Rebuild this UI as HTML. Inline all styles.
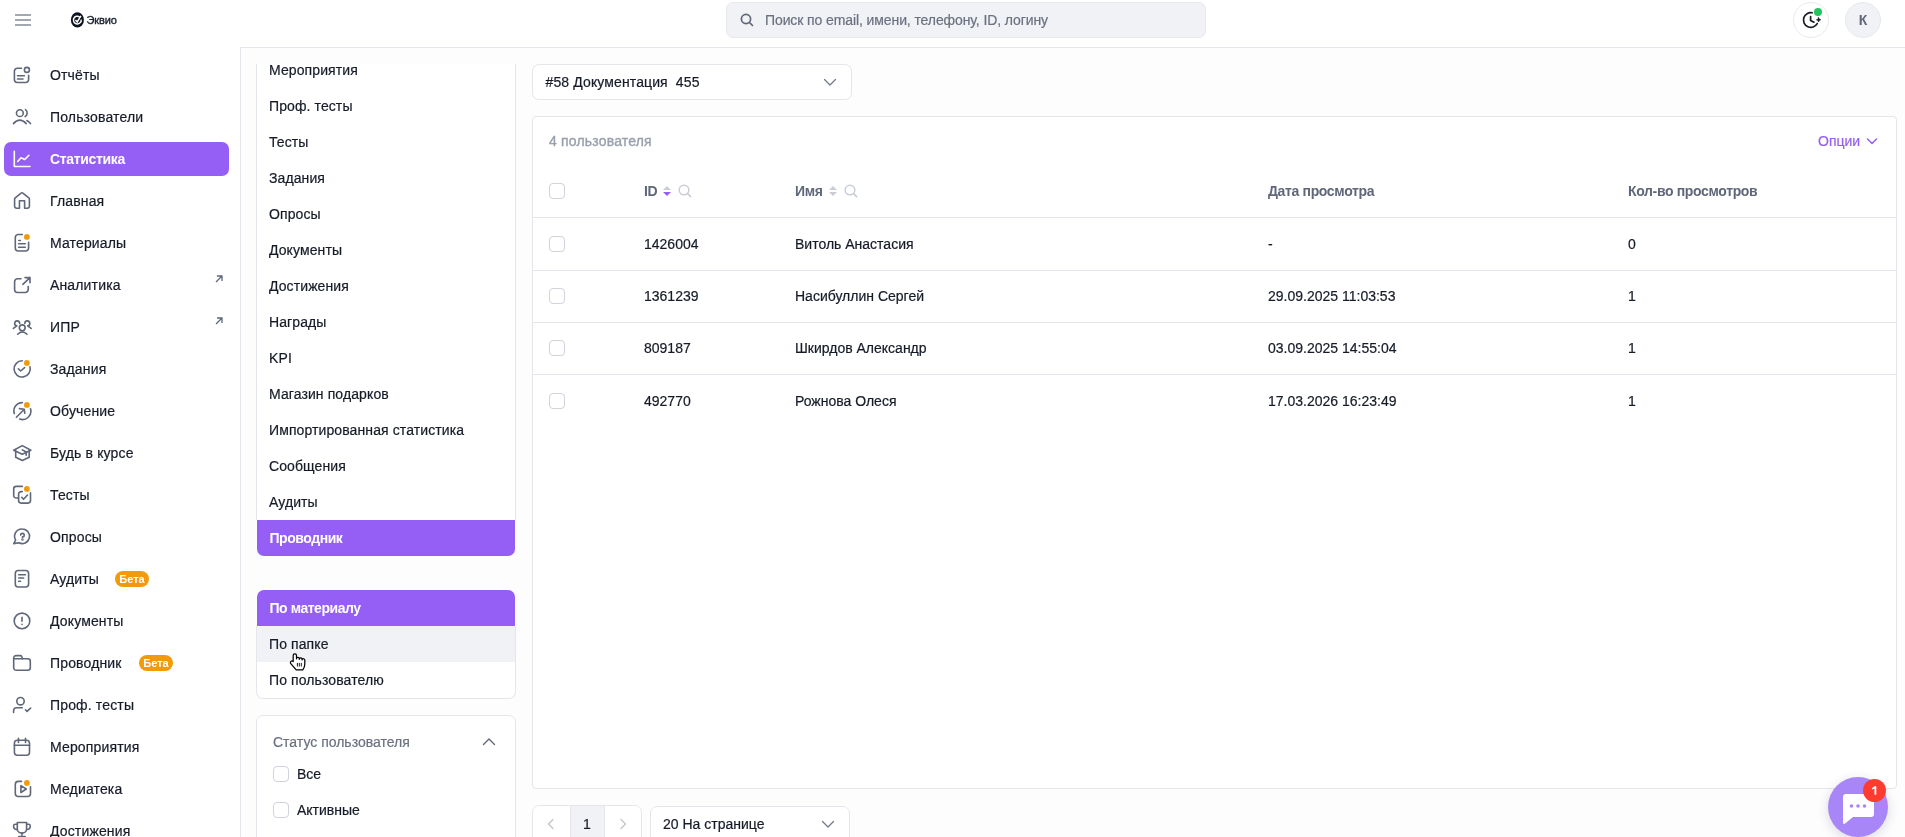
<!DOCTYPE html>
<html><head><meta charset="utf-8"><style>
*{box-sizing:border-box;margin:0;padding:0}
html,body{width:1905px;height:837px;overflow:hidden;background:#fff;font-family:"Liberation Sans",sans-serif;color:#161b28;font-size:14px}
.abs,div,svg{position:absolute}
.ic{left:12px}
.si{left:50px;height:20px;line-height:20px;font-size:14px;color:#161b28;white-space:nowrap;letter-spacing:0.15px}
.si.on{color:#fff;font-weight:bold;letter-spacing:-0.33px}
.act{left:4px;width:225px;height:34px;background:#955ef4;border-radius:7px}
.ext{left:215px}
.beta{width:34px;height:16px;border-radius:8px;background:#f29a0f;color:#fff;font-size:11px;font-weight:bold;line-height:16px;text-align:center}
#main{left:240px;top:47px;width:1665px;height:790px;border-top:1px solid #e4e6eb;border-left:1px solid #e4e6eb;background:#fdfdfe}
#hdr-search{left:726px;top:2px;width:480px;height:36px;background:#f1f2f5;border:1px solid #e6e8ec;border-radius:7px}
.mi{left:0;width:258px;height:36px;line-height:36px;padding-left:12px;font-size:14px;color:#161b28;white-space:nowrap;letter-spacing:0.1px}
.mi.on{background:#955ef4;color:#fff;font-weight:bold;border-radius:0 0 7px 7px;letter-spacing:-0.45px;padding-left:12.5px}
#list1{left:256px;top:64px;width:260px;height:456px;overflow:hidden;border-left:1px solid #e4e6eb;border-right:1px solid #e4e6eb;background:#fff}
.card{background:#fff;border:1px solid #e4e6eb;border-radius:7px;overflow:hidden}
.cb{width:16px;height:16px;border:1px solid #cfd3db;border-radius:4px;background:#fff}
.td{height:20px;line-height:20px;white-space:nowrap;color:#161b28}
.th{height:20px;line-height:20px;white-space:nowrap;color:#5f6779;font-weight:bold;letter-spacing:-0.35px}
.hl{left:532px;width:1364px;height:1px;background:#e4e6eb}
#root{left:0;top:0;width:1905px;height:837px;will-change:transform;-webkit-text-stroke:0.2px currentColor}
.th,.si.on,.mi.on,.beta,.nostroke{-webkit-text-stroke:0}
</style></head><body><div id="root">
<!-- header -->
<svg style="left:15px;top:14px" width="16" height="12" viewBox="0 0 16 12"><path d="M0 1h16M0 6h16M0 11h16" stroke="#858b98" stroke-width="1.6"/></svg>
<svg style="left:70px;top:11px" width="16" height="18" viewBox="0 0 16 18"><ellipse cx="7.4" cy="8.9" rx="6.5" ry="7.7" fill="#0d1220"/><path d="M9.6 5.9A3.9 3.9 0 1 0 11.2 8.6" fill="none" stroke="#fff" stroke-width="1.5"/><path d="M5.4 8.9L7.2 10.9L10.9 4.8" fill="none" stroke="#fff" stroke-width="1.5"/></svg>
<div style="left:86.5px;top:13px;font-size:11px;line-height:14px;color:#1a1f2c;letter-spacing:-0.1px;-webkit-text-stroke:0.35px #1a1f2c">Эквио</div>
<div id="hdr-search"></div>
<svg style="left:740px;top:13px" width="14" height="14" viewBox="0 0 14 14" fill="none" stroke="#5f6779" stroke-width="1.7" stroke-linecap="round"><circle cx="6" cy="6" r="4.6"/><path d="M9.5 9.5L12.5 12.5"/></svg>
<div style="left:765px;top:10px;height:20px;line-height:20px;color:#6b7180;white-space:nowrap;letter-spacing:-0.1px">Поиск по email, имени, телефону, ID, логину</div>
<div style="left:1793px;top:2px;width:36px;height:36px;border-radius:50%;border:1px solid #e6e8ec;background:#fff"></div>
<svg style="left:1799px;top:8px" width="24" height="24" viewBox="0 0 24 24" fill="none" stroke="#161b28" stroke-width="1.7" stroke-linecap="round"><path d="M13.2 4.75A7.35 7.35 0 1 0 18.2 15.6"/><path d="M11.6 8.6V12.4L15 14.2"/><path d="M19.6 9.6L20.3 11.1L21.8 11.8L20.3 12.5L19.6 14L18.9 12.5L17.4 11.8L18.9 11.1Z" fill="#161b28" stroke-width="0.6"/></svg>
<div style="left:1813.8px;top:7.8px;width:8.4px;height:8.4px;border-radius:50%;background:#22c55e"></div>
<div style="left:1845px;top:2px;width:36px;height:36px;border-radius:50%;border:1px solid #e6e8ec;background:#f1f2f5;text-align:center;line-height:34px;font-weight:bold;color:#5f6779;font-size:14px;-webkit-text-stroke:0">К</div>

<!-- sidebar -->
<svg class="ic" style="top:65px" width="20" height="20" viewBox="0 0 20 20" fill="none" stroke="#5f6779" stroke-width="1.6" stroke-linecap="round" stroke-linejoin="round"><path d="M9.5 3.2H5.4A3 3 0 0 0 2.4 6.2V14.5A3 3 0 0 0 5.4 17.5H13.6A3 3 0 0 0 16.6 14.5V10.3"/><circle cx="14.9" cy="4.9" r="2.5"/><path d="M5.5 10.75H12.4M5.5 14H11"/></svg>
<div class="si" style="top:65px">Отчёты</div>
<svg class="ic" style="top:107px" width="20" height="20" viewBox="0 0 20 20" fill="none" stroke="#5f6779" stroke-width="1.6" stroke-linecap="round" stroke-linejoin="round"><circle cx="7.85" cy="6.15" r="3.4"/><path d="M13.5 2.6A4.2 4.2 0 0 1 13.1 9.6"/><path d="M1.4 16.6Q7.8 9.6 14.2 16.6"/><path d="M14.9 13.5Q17 14.6 18.5 16.6"/></svg>
<div class="si" style="top:107px">Пользователи</div>
<div class="act" style="top:142px"></div>
<svg class="ic" style="top:149px" width="20" height="20" viewBox="0 0 20 20" fill="none" stroke="#fff" stroke-width="1.6" stroke-linecap="round" stroke-linejoin="round"><path d="M2.3 2.2V17.5H18"/><path d="M5.7 12.5L9 8.7L12.8 10.4L16.9 6.3"/></svg>
<div class="si on" style="top:149px">Статистика</div>
<svg class="ic" style="top:191px" width="20" height="20" viewBox="0 0 20 20" fill="none" stroke="#5f6779" stroke-width="1.6" stroke-linecap="round" stroke-linejoin="round"><path d="M2.6 15.2V8.1A1.6 1.6 0 0 1 3.2 6.9L9.1 2.1A1.5 1.5 0 0 1 10.9 2.1L16.8 6.9A1.6 1.6 0 0 1 17.4 8.1V15.2A2 2 0 0 1 15.4 17.2H12.6V9.8H7.45V17.2H4.6A2 2 0 0 1 2.6 15.2Z"/></svg>
<div class="si" style="top:191px">Главная</div>
<svg class="ic" style="top:233px" width="20" height="20" viewBox="0 0 20 20" fill="none" stroke="#5f6779" stroke-width="1.6" stroke-linecap="round" stroke-linejoin="round"><path d="M10.3 1.45H6.3A3 3 0 0 0 3.3 4.45V15A3 3 0 0 0 6.3 18H13.6A3 3 0 0 0 16.6 15V9.2"/><path d="M6.8 7.45H8.4M6.6 10.75H13.3M6.6 14.2H13.3"/><circle cx="14.9" cy="3.9" r="3.6" fill="#fff" stroke="none"/><circle cx="14.9" cy="3.9" r="2.9" fill="#f29a0f" stroke="none"/></svg>
<div class="si" style="top:233px">Материалы</div>
<svg class="ic" style="top:275px" width="20" height="20" viewBox="0 0 20 20" fill="none" stroke="#5f6779" stroke-width="1.6" stroke-linecap="round" stroke-linejoin="round"><path d="M9 3.8H5.6a3 3 0 0 0-3 3V14.5a3 3 0 0 0 3 3h7.6a3 3 0 0 0 3-3v-3"/><path d="M10.8 9.3L18 2.6M13 2.6h5v5.2"/></svg>
<div class="si" style="top:275px">Аналитика</div>
<svg class="ext" style="top:275px" width="8" height="8" viewBox="0 0 8 8" fill="none" stroke="#5f6779" stroke-width="1.3"><path d="M1 7L7 1M2 1H7V6"/></svg>
<svg class="ic" style="top:317px" width="20" height="20" viewBox="0 0 20 20" fill="none" stroke="#5f6779" stroke-width="1.6" stroke-linecap="round" stroke-linejoin="round"><circle cx="10.25" cy="10.8" r="2.9"/><path d="M5.6 17.2Q10.3 12.6 15 17.2"/><path d="M7.7 6.4A2.5 2.5 0 1 0 4.77 8.86L1.4 11.4"/><path d="M12.8 6.4A2.5 2.5 0 1 1 15.73 8.86L19.1 11.4"/></svg>
<div class="si" style="top:317px">ИПР</div>
<svg class="ext" style="top:317px" width="8" height="8" viewBox="0 0 8 8" fill="none" stroke="#5f6779" stroke-width="1.3"><path d="M1 7L7 1M2 1H7V6"/></svg>
<svg class="ic" style="top:359px" width="20" height="20" viewBox="0 0 20 20" fill="none" stroke="#5f6779" stroke-width="1.6" stroke-linecap="round" stroke-linejoin="round"><path d="M10.3 1.8A8.1 8.1 0 1 0 18 7.8"/><path d="M6.3 9.75L8.6 12L12.6 8.6"/><circle cx="14.9" cy="3.9" r="3.6" fill="#fff" stroke="none"/><circle cx="14.9" cy="3.9" r="2.9" fill="#f29a0f" stroke="none"/></svg>
<div class="si" style="top:359px">Задания</div>
<svg class="ic" style="top:401px" width="20" height="20" viewBox="0 0 20 20" fill="none" stroke="#5f6779" stroke-width="1.6" stroke-linecap="round" stroke-linejoin="round"><path d="M10.3 1.6A8.4 8.4 0 0 0 2.3 12.6"/><path d="M7.7 18.1A8.4 8.4 0 0 0 18.5 7.7"/><path d="M4.4 16.3L12.3 8.3M7.5 7.6L12.3 8.3L12.8 12.3"/><circle cx="14.9" cy="3.9" r="3.6" fill="#fff" stroke="none"/><circle cx="14.9" cy="3.9" r="2.9" fill="#f29a0f" stroke="none"/></svg>
<div class="si" style="top:401px">Обучение</div>
<svg class="ic" style="top:443px" width="20" height="20" viewBox="0 0 20 20" fill="none" stroke="#5f6779" stroke-width="1.6" stroke-linecap="round" stroke-linejoin="round"><path d="M1.7 7.2L10.3 2.6L18.9 7.2L10.3 11.2Z"/><path d="M3.7 7.9V14.3L10.3 17.5L17.2 14.3V7.9"/><path d="M10.3 6.9L14.2 9V12.3"/></svg>
<div class="si" style="top:443px">Будь в курсе</div>
<svg class="ic" style="top:485px" width="20" height="20" viewBox="0 0 20 20" fill="none" stroke="#5f6779" stroke-width="1.6" stroke-linecap="round" stroke-linejoin="round"><path d="M10.3 1.4H4.2A2.5 2.5 0 0 0 1.7 3.9V10.5A2.5 2.5 0 0 0 4.2 13H6.6"/><path d="M10.3 6.6H9.1A2.5 2.5 0 0 0 6.6 9.1V15.6A2.5 2.5 0 0 0 9.1 18.1H16A2.5 2.5 0 0 0 18.5 15.6V7.9"/><path d="M9.7 12.3L11.5 14.2L15.5 10"/><circle cx="14.9" cy="3.9" r="3.6" fill="#fff" stroke="none"/><circle cx="14.9" cy="3.9" r="2.9" fill="#f29a0f" stroke="none"/></svg>
<div class="si" style="top:485px">Тесты</div>
<svg class="ic" style="top:527px" width="20" height="20" viewBox="0 0 20 20" fill="none" stroke="#5f6779" stroke-width="1.6" stroke-linecap="round" stroke-linejoin="round"><path d="M10.3 2A7.3 7.3 0 1 1 6.9 15.8L1.8 16.6L3.6 13A7.3 7.3 0 0 1 10.3 2Z"/><path d="M8.7 8.1A1.75 1.75 0 1 1 10.45 9.9V10.4"/><circle cx="10.45" cy="12.4" r="0.45"/></svg>
<div class="si" style="top:527px">Опросы</div>
<svg class="ic" style="top:569px" width="20" height="20" viewBox="0 0 20 20" fill="none" stroke="#5f6779" stroke-width="1.6" stroke-linecap="round" stroke-linejoin="round"><rect x="3.3" y="1.45" width="13.3" height="16.55" rx="3"/><path d="M6.7 5.7H13.4M6.7 9H11.7M6.7 12.3H8.5"/></svg>
<div class="si" style="top:569px">Аудиты</div>
<div class="beta" style="top:571px;left:115px">Бета</div>
<svg class="ic" style="top:611px" width="20" height="20" viewBox="0 0 20 20" fill="none" stroke="#5f6779" stroke-width="1.6" stroke-linecap="round" stroke-linejoin="round"><circle cx="10" cy="9.9" r="7.8"/><path d="M10 6.4V10.2M10 13.2V13.4"/></svg>
<div class="si" style="top:611px">Документы</div>
<svg class="ic" style="top:653px" width="20" height="20" viewBox="0 0 20 20" fill="none" stroke="#5f6779" stroke-width="1.6" stroke-linecap="round" stroke-linejoin="round"><path d="M1.7 14.7V5A2.4 2.4 0 0 1 4.1 2.6H8.3A1.5 1.5 0 0 1 9.7 3.5L10.6 5.7H15.8A2.5 2.5 0 0 1 18.3 8.2V14.7A2.5 2.5 0 0 1 15.8 17.2H4.2A2.5 2.5 0 0 1 1.7 14.7Z"/><path d="M1.7 5.7H10.6"/></svg>
<div class="si" style="top:653px">Проводник</div>
<div class="beta" style="top:655px;left:139px">Бета</div>
<svg class="ic" style="top:695px" width="20" height="20" viewBox="0 0 20 20" fill="none" stroke="#5f6779" stroke-width="1.6" stroke-linecap="round" stroke-linejoin="round"><circle cx="8.5" cy="6.2" r="3.7"/><path d="M1.6 17.4V15.8A3 3 0 0 1 4.6 12.8H10.3"/><path d="M13.5 14.8L15 16.4L18.6 13.1"/></svg>
<div class="si" style="top:695px">Проф. тесты</div>
<svg class="ic" style="top:737px" width="20" height="20" viewBox="0 0 20 20" fill="none" stroke="#5f6779" stroke-width="1.6" stroke-linecap="round" stroke-linejoin="round"><rect x="2.4" y="3.3" width="15.1" height="15" rx="3"/><path d="M2.4 8.3H17.5M6.45 1.3V5.4M13.5 1.3V5.4"/></svg>
<div class="si" style="top:737px">Мероприятия</div>
<svg class="ic" style="top:779px" width="20" height="20" viewBox="0 0 20 20" fill="none" stroke="#5f6779" stroke-width="1.6" stroke-linecap="round" stroke-linejoin="round"><path d="M9.5 2.4H6.3A3 3 0 0 0 3.3 5.4V14.5A3 3 0 0 0 6.3 17.5H15.5A3 3 0 0 0 18.5 14.5V7.9"/><path d="M8.9 6.6L14.3 10L8.9 13.5Z"/><circle cx="14.9" cy="3.9" r="3.6" fill="#fff" stroke="none"/><circle cx="14.9" cy="3.9" r="2.9" fill="#f29a0f" stroke="none"/></svg>
<div class="si" style="top:779px">Медиатека</div>
<svg class="ic" style="top:821px" width="20" height="20" viewBox="0 0 20 20" fill="none" stroke="#5f6779" stroke-width="1.6" stroke-linecap="round" stroke-linejoin="round"><path d="M5.3 1.5H14.6V8A4.65 4.1 0 0 1 5.3 8Z"/><path d="M5.3 3.3H3.2A1.6 1.6 0 0 0 1.6 4.9V5.5A2.8 2.8 0 0 0 5.3 8.3M14.6 3.3H16.6A1.6 1.6 0 0 1 18.2 4.9V5.5A2.8 2.8 0 0 1 14.6 8.3"/><path d="M9.95 12.1V14.3"/><path d="M7.2 16H12.7" stroke-width="2.6"/></svg>
<div class="si" style="top:821px">Достижения</div>

<div id="main"></div>
<div id="list1">
<div class="mi" style="top:-12px">Мероприятия</div>
<div class="mi" style="top:24px">Проф. тесты</div>
<div class="mi" style="top:60px">Тесты</div>
<div class="mi" style="top:96px">Задания</div>
<div class="mi" style="top:132px">Опросы</div>
<div class="mi" style="top:168px">Документы</div>
<div class="mi" style="top:204px">Достижения</div>
<div class="mi" style="top:240px">Награды</div>
<div class="mi" style="top:276px">KPI</div>
<div class="mi" style="top:312px">Магазин подарков</div>
<div class="mi" style="top:348px">Импортированная статистика</div>
<div class="mi" style="top:384px">Сообщения</div>
<div class="mi" style="top:420px">Аудиты</div>
</div>
<div class="mi on" style="left:257px;top:520px;width:258px;border-radius:0 0 7px 7px">Проводник</div>
<div class="mi on" style="left:257px;top:590px;width:258px;border-radius:7px 7px 0 0">По материалу</div>
<div style="left:256px;top:626px;width:260px;height:73px;background:#fff;border:1px solid #e4e6eb;border-top:none;border-radius:0 0 7px 7px;overflow:hidden">
  <div class="mi" style="top:0;left:0;background:#f1f2f5">По папке</div>
  <div class="mi" style="top:36px;left:0">По пользователю</div>
</div>
<div class="card" style="left:256px;top:715px;width:260px;height:140px">
  <div style="left:16px;top:16px;height:20px;line-height:20px;color:#6b7180;white-space:nowrap">Статус пользователя</div>
  <svg style="left:225px;top:21px" width="14" height="10" viewBox="0 0 14 10" fill="none" stroke="#5f6779" stroke-width="1.35" stroke-linecap="round" stroke-linejoin="round"><path d="M1.5 7.5L7 2L12.5 7.5"/></svg>
  <div class="cb" style="left:16px;top:50px"></div>
  <div style="left:40px;top:48px;height:20px;line-height:20px;white-space:nowrap">Все</div>
  <div class="cb" style="left:16px;top:86px"></div>
  <div style="left:40px;top:84px;height:20px;line-height:20px;white-space:nowrap">Активные</div>
</div>
<svg style="left:289px;top:653px" width="18" height="19" viewBox="0 0 18 19"><path d="M4.2 8.5V2.6A1.65 1.65 0 0 1 7.5 2.6V5.8A1.4 1.4 0 0 1 10.3 5.8V6.3A1.4 1.4 0 0 1 13.1 6.3V6.9A1.35 1.35 0 0 1 15.8 7.3V11C15.8 13.5 14.8 15.5 13.8 16.8H7.2L1.8 10.6A1.3 1.3 0 0 1 4.2 8.5Z" fill="#fff" stroke="#000" stroke-width="1.25" stroke-linejoin="round"/><path d="M8.4 9.9V13.5M10.3 9.9V13.5M12.3 9.9V13.5" stroke="#000" stroke-width="0.9"/></svg>

<!-- right -->
<div class="card" style="left:532px;top:64px;width:320px;height:36px"></div>
<div style="left:545.5px;top:72px;height:20px;line-height:20px;white-space:nowrap;letter-spacing:0.12px">#58 Документация&nbsp; 455</div>
<svg style="left:823px;top:77px" width="14" height="10" viewBox="0 0 14 10" fill="none" stroke="#737a89" stroke-width="1.3" stroke-linecap="round" stroke-linejoin="round"><path d="M1.5 2.5L7 8L12.5 2.5"/></svg>

<div class="card" style="left:532px;top:116px;width:1365px;height:673px;border-radius:4px"></div>
<div style="left:549px;top:131px;height:20px;line-height:20px;white-space:nowrap;color:#99a0ac;letter-spacing:0.18px;-webkit-text-stroke:0.35px #99a0ac">4 пользователя</div>
<div style="left:1818px;top:131px;height:20px;line-height:20px;white-space:nowrap;color:#955ef4">Опции</div>
<svg style="left:1866px;top:136px" width="12" height="10" viewBox="0 0 12 10" fill="none" stroke="#955ef4" stroke-width="1.5" stroke-linecap="round" stroke-linejoin="round"><path d="M1.5 3L6 7.5L10.5 3"/></svg>

<div class="cb" style="left:549px;top:183px"></div>
<div class="th" style="left:644px;top:181px">ID</div>
<svg style="left:662px;top:185px" width="10" height="12" viewBox="0 0 10 12"><path d="M1 5L5 1L9 5Z" fill="#c9cdd5"/><path d="M1 7L5 11L9 7Z" fill="#955ef4"/></svg>
<svg style="left:678px;top:184px" width="14" height="14" viewBox="0 0 14 14" fill="none" stroke="#c9cdd5" stroke-width="1.5" stroke-linecap="round"><circle cx="6" cy="6" r="4.8"/><path d="M9.6 9.6L12.6 12.6"/></svg>
<div class="th" style="left:795px;top:181px">Имя</div>
<svg style="left:828px;top:185px" width="10" height="12" viewBox="0 0 10 12"><path d="M1 5L5 1L9 5Z" fill="#c9cdd5"/><path d="M1 7L5 11L9 7Z" fill="#c9cdd5"/></svg>
<svg style="left:844px;top:184px" width="14" height="14" viewBox="0 0 14 14" fill="none" stroke="#c9cdd5" stroke-width="1.5" stroke-linecap="round"><circle cx="6" cy="6" r="4.8"/><path d="M9.6 9.6L12.6 12.6"/></svg>
<div class="th" style="left:1268px;top:181px">Дата просмотра</div>
<div class="th" style="left:1628px;top:181px">Кол-во просмотров</div>
<div class="hl" style="top:217px"></div>
<div class="cb" style="left:549px;top:236.0px"></div>
<div class="td" style="left:644px;top:234.0px">1426004</div>
<div class="td" style="left:795px;top:234.0px">Витоль Анастасия</div>
<div class="td" style="left:1268px;top:234.0px">-</div>
<div class="td" style="left:1628px;top:234.0px">0</div>
<div class="hl" style="top:270px"></div>
<div class="cb" style="left:549px;top:288.0px"></div>
<div class="td" style="left:644px;top:286.0px">1361239</div>
<div class="td" style="left:795px;top:286.0px">Насибуллин Сергей</div>
<div class="td" style="left:1268px;top:286.0px">29.09.2025 11:03:53</div>
<div class="td" style="left:1628px;top:286.0px">1</div>
<div class="hl" style="top:322px"></div>
<div class="cb" style="left:549px;top:340.0px"></div>
<div class="td" style="left:644px;top:338.0px">809187</div>
<div class="td" style="left:795px;top:338.0px">Шкирдов Александр</div>
<div class="td" style="left:1268px;top:338.0px">03.09.2025 14:55:04</div>
<div class="td" style="left:1628px;top:338.0px">1</div>
<div class="hl" style="top:374px"></div>
<div class="cb" style="left:549px;top:393.0px"></div>
<div class="td" style="left:644px;top:391.0px">492770</div>
<div class="td" style="left:795px;top:391.0px">Рожнова Олеся</div>
<div class="td" style="left:1268px;top:391.0px">17.03.2026 16:23:49</div>
<div class="td" style="left:1628px;top:391.0px">1</div>

<!-- pagination -->
<div class="card" style="left:532px;top:805px;width:110px;height:50px">
  <div style="left:37px;top:0;width:35px;height:50px;background:#f1f2f5;border-left:1px solid #e4e6eb;border-right:1px solid #e4e6eb"></div>
</div>
<svg style="left:546px;top:818px" width="10" height="12" viewBox="0 0 10 12" fill="none" stroke="#c2c6ce" stroke-width="1.4" stroke-linecap="round" stroke-linejoin="round"><path d="M7 1.5L2.5 6L7 10.5"/></svg>
<div style="left:583px;top:814px;height:20px;line-height:20px">1</div>
<svg style="left:618px;top:818px" width="10" height="12" viewBox="0 0 10 12" fill="none" stroke="#c2c6ce" stroke-width="1.4" stroke-linecap="round" stroke-linejoin="round"><path d="M3 1.5L7.5 6L3 10.5"/></svg>
<div class="card" style="left:650px;top:806px;width:200px;height:50px"></div>
<div style="left:663px;top:814px;height:20px;line-height:20px;white-space:nowrap">20 На странице</div>
<svg style="left:821px;top:819px" width="14" height="10" viewBox="0 0 14 10" fill="none" stroke="#737a89" stroke-width="1.3" stroke-linecap="round" stroke-linejoin="round"><path d="M1.5 2.5L7 8L12.5 2.5"/></svg>

<!-- chat -->
<div style="left:1828px;top:777px;width:60px;height:60px;border-radius:50%;background:#a886f7;box-shadow:0 3px 12px rgba(40,40,70,0.16)"></div>
<svg style="left:1840px;top:792px" width="36" height="34" viewBox="0 0 36 34"><path d="M6 2H31A3 3 0 0 1 34 5V22A3 3 0 0 1 31 25H13L4.5 32A1.5 1.5 0 0 1 3 31V5A3 3 0 0 1 6 2Z" fill="#fff"/><circle cx="11.5" cy="14" r="1.8" fill="#a886f7"/><circle cx="18" cy="14" r="1.8" fill="#a886f7"/><circle cx="24.5" cy="14" r="1.8" fill="#a886f7"/></svg>
<div style="left:1863px;top:779px;width:23px;height:23px;border-radius:50%;background:#ff3b30"></div>
<svg style="left:1863px;top:779px" width="23" height="23" viewBox="0 0 23 23"><path d="M11.6 7.2H13.3V15.8H11.5V9.6L9.1 10.4V8.9Z" fill="#fff"/></svg>
</div></body></html>
